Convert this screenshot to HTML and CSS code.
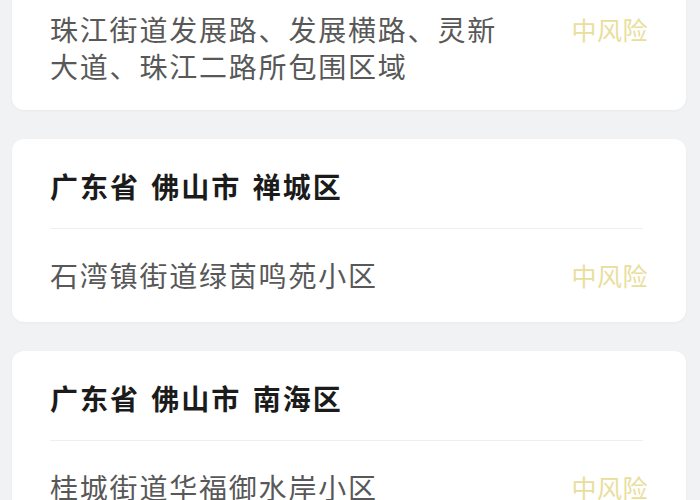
FILE: index.html
```html
<!DOCTYPE html>
<html lang="zh-CN">
<head>
    <meta charset="UTF-8">
    <meta name="viewport" content="width=device-width, initial-scale=1.0">
    <title>风险地区</title>
    <link rel="stylesheet" href="styles.css">
</head>
<body>
    <div class="list">
        <div class="area-card">
            <div class="area-title">广东省 广州市 海珠区</div>
            <div class="area-row area-row-long">
                <div class="area-name">珠江街道发展路、发展横路、灵新大道、珠江二路所包围区域</div>
                <div class="risk">中风险</div>
            </div>
        </div>

        <div class="area-card">
            <div class="area-title">广东省 佛山市 禅城区</div>
            <div class="area-row">
                <div class="area-name">石湾镇街道绿茵鸣苑小区</div>
                <div class="risk">中风险</div>
            </div>
        </div>

        <div class="area-card">
            <div class="area-title">广东省 佛山市 南海区</div>
            <div class="area-row">
                <div class="area-name">桂城街道华福御水岸小区</div>
                <div class="risk">中风险</div>
            </div>
        </div>
    </div>
</body>
</html>
```

FILE: styles.css
```css
body {
    margin: 0;
    background-color: #f1f2f4;
    font-family: "Noto Sans CJK SC", "Noto Sans", sans-serif;
    overflow: hidden;
}
.list {
    display: flex;
    flex-direction: column;
    gap: 29px;
    padding: 0 14px 0 12px;
    margin-top: -110px;
}
.area-card {
    background-color: #fff;
    border-radius: 12px;
    box-shadow: 0 1px 3px rgba(0, 0, 0, 0.04);
}
.area-title {
    margin: 0 43px 0 38px;
    padding: 28px 0 23px;
    font-size: 28px;
    line-height: 38px;
    letter-spacing: 2px;
    word-spacing: 3px;
    font-weight: bold;
    color: #1b1b1b;
    border-bottom: 1px solid #eeeff1;
}
.area-row {
    display: flex;
    align-items: flex-start;
    justify-content: space-between;
    padding: 28px 38px;
}
.area-row-long {
    padding: 31px 38px 25px;
}
.area-name {
    width: 460px;
    font-size: 28px;
    letter-spacing: 1.8px;
    line-height: 37px;
    color: #585858;
}
.risk {
    font-size: 25px;
    line-height: 37px;
    letter-spacing: 0.5px;
    color: #e9de9c;
}
```
